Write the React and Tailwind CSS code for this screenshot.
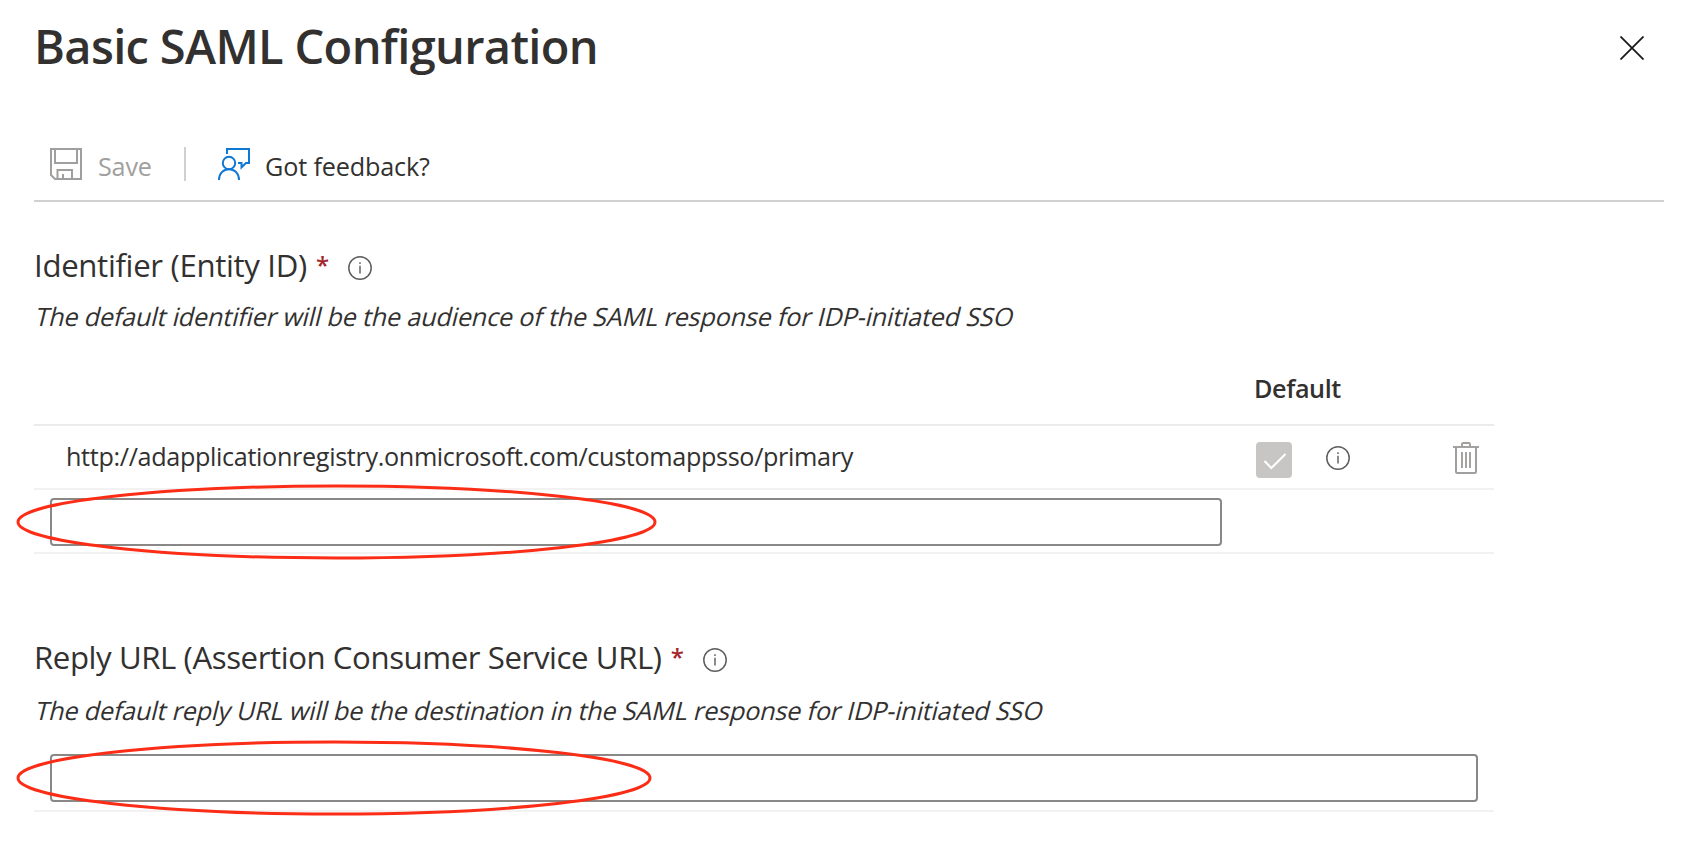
import React from "react";

function InfoIcon() {
  return (
    <svg width="24" height="24" viewBox="0 0 24 24" fill="none" className="shrink-0">
      <circle cx="12" cy="12" r="11.2" stroke="#605e5c" strokeWidth="1.5" />
      <path d="M12 6.3v1.8M12 9.8v7.8" stroke="#797775" strokeWidth="1.7" />
    </svg>
  );
}

function SaveIcon() {
  return (
    <svg width="32" height="32" viewBox="0 0 32 32" fill="none" stroke="#a19f9d" strokeWidth="2" className="shrink-0">
      <path d="M1 1H31V31H5L1 27Z" />
      <path d="M5 1V15H27V1" />
      <path d="M7.5 31V22H22V31" />
      <path d="M13 26V31" />
    </svg>
  );
}

function FeedbackIcon() {
  return (
    <svg width="32" height="32" viewBox="0 0 32 32" fill="none" stroke="#0f78d4" strokeWidth="2" className="shrink-0">
      <path d="M9 6V1H31V15H28L23.5 19.3V15H20" />
      <circle cx="11" cy="15" r="6.2" />
      <path d="M1 32C1 25.5 5.3 21.2 11 21.2S21 25.5 21 32" />
    </svg>
  );
}

function TrashIcon() {
  return (
    <svg width="26" height="32" viewBox="0 0 26 32" fill="none" stroke="#a19f9d" className="shrink-0">
      <path d="M0 5H26" strokeWidth="1.9" />
      <path d="M9 5V2.2Q9 1 10.2 1H15.8Q17 1 17 2.2V5" strokeWidth="1.9" />
      <path d="M3 5V29.5Q3 31 4.500 31H21.500Q23 31 23 29.5V5" strokeWidth="2" />
      <path d="M9 10V26M13 10V26M17 10V26" strokeWidth="1.9" />
    </svg>
  );
}

function SectionHeading({ label, className }) {
  return (
    <div className="flex h-10 items-center whitespace-nowrap pl-[34px]">
      <h2 className={`text-[31.2px] leading-10 ${className}`}>{label}</h2>
      <span className="ml-[9px] text-2xl font-semibold leading-10 text-[#a4262c]">*</span>
      <span className="ml-[19px] pt-1.5">
        <InfoIcon />
      </span>
    </div>
  );
}

function Highlight({ rx, className }) {
  return (
    <svg width={rx * 2 + 4} height="76" className={`pointer-events-none absolute ${className}`}>
      <ellipse cx={rx + 2} cy="38" rx={rx} ry="36" fill="none" stroke="#fc2d17" strokeWidth="3" />
    </svg>
  );
}

export default function App() {
  return (
    <main className="h-[862px] w-[1702px] overflow-hidden bg-white pt-4 font-['Open_Sans',sans-serif] text-[#323130]">
      <header className="flex h-[60px] items-center justify-between pl-[34px] pr-[58px]">
        <h1 className="whitespace-nowrap text-[47px] font-semibold leading-[60px] tracking-[-0.66px]">
          Basic SAML Configuration
        </h1>
        <button aria-label="Close" className="pt-1">
          <svg width="24" height="24" viewBox="0 0 24 24" stroke="#1b1a19" strokeWidth="1.8" className="block">
            <path d="M0.500 0.500L23.500 23.5M23.500 0.500L0.500 23.5" />
          </svg>
        </button>
      </header>

      <div className="ml-[34px] mt-[52px] flex h-[74px] w-[1630px] items-center border-b-2 border-[#d2d0ce] pl-4 text-[25.2px] leading-8">
        <SaveIcon />
        <span className="ml-4 w-[86px] pt-1 tracking-[-0.2px] text-[#a19f9d]">Save</span>
        <div className="h-[34px] w-0.5 bg-[#d2d0ce]" />
        <div className="ml-8 flex items-center">
          <FeedbackIcon />
          <span className="ml-[15px] whitespace-nowrap pt-1 tracking-[-0.15px]">Got feedback?</span>
        </div>
      </div>

      <section className="mt-[43px]">
        <SectionHeading label="Identifier (Entity ID)" className="tracking-[-0.33px]" />
        <p className="ml-[34px] mt-[13px] w-fit origin-[0_28px] -skew-x-[14deg] whitespace-nowrap text-[25.2px] leading-9 tracking-[-0.18px]">
          The default identifier will be the audience of the SAML response for IDP-initiated SSO
        </p>
        <div className="ml-[34px] mt-9 w-[1460px]">
          <div className="h-14 border-b-2 border-[#ebebeb] pl-[1220px] text-[25.2px] font-semibold leading-9 tracking-[-0.4px]">
            Default
          </div>
          <div className="flex h-16 items-center border-b-2 border-[#f2f2f2] pl-8">
            <span className="w-[1190px] whitespace-nowrap pb-0.5 text-[25.2px] leading-9 tracking-[-0.34px]">
              http://adapplicationregistry.onmicrosoft.com/customappsso/primary
            </span>
            <div className="mt-[6px] h-9 w-9 rounded bg-[#c8c6c4]">
              <svg width="36" height="36" viewBox="0 0 36 36" fill="none" stroke="#ffffff" strokeWidth="2">
                <path d="M8.500 19L15.400 26L29.500 12" />
              </svg>
            </div>
            <span className="ml-[34px] pt-0.5">
              <InfoIcon />
            </span>
            <span className="ml-[103px] pt-0.5">
              <TrashIcon />
            </span>
          </div>
          <div className="relative h-16 border-b-2 border-[#f2f2f2] pl-4 pt-2">
            <input className="block h-12 w-[1172px] rounded border-2 border-[#8a8886] bg-white outline-none" />
            <Highlight rx={318.5} className="-left-[18.5px] -top-[6.5px]" />
          </div>
        </div>
      </section>

      <section className="mt-[83px]">
        <SectionHeading label="Reply URL (Assertion Consumer Service URL)" className="tracking-[-0.42px]" />
        <p className="ml-[34px] mt-[15px] w-fit origin-[0_28px] -skew-x-[14deg] whitespace-nowrap text-[25.2px] leading-9 tracking-[-0.18px]">
          The default reply URL will be the destination in the SAML response for IDP-initiated SSO
        </p>
        <div className="relative ml-[34px] mt-[26px] h-[58px] w-[1460px] border-b-2 border-[#f2f2f2] pl-4">
          <input className="block h-12 w-[1428px] rounded border-2 border-[#8a8886] bg-white outline-none" />
          <Highlight rx={316} className="-left-[18.5px] -top-[14.5px]" />
        </div>
      </section>
    </main>
  );
}
